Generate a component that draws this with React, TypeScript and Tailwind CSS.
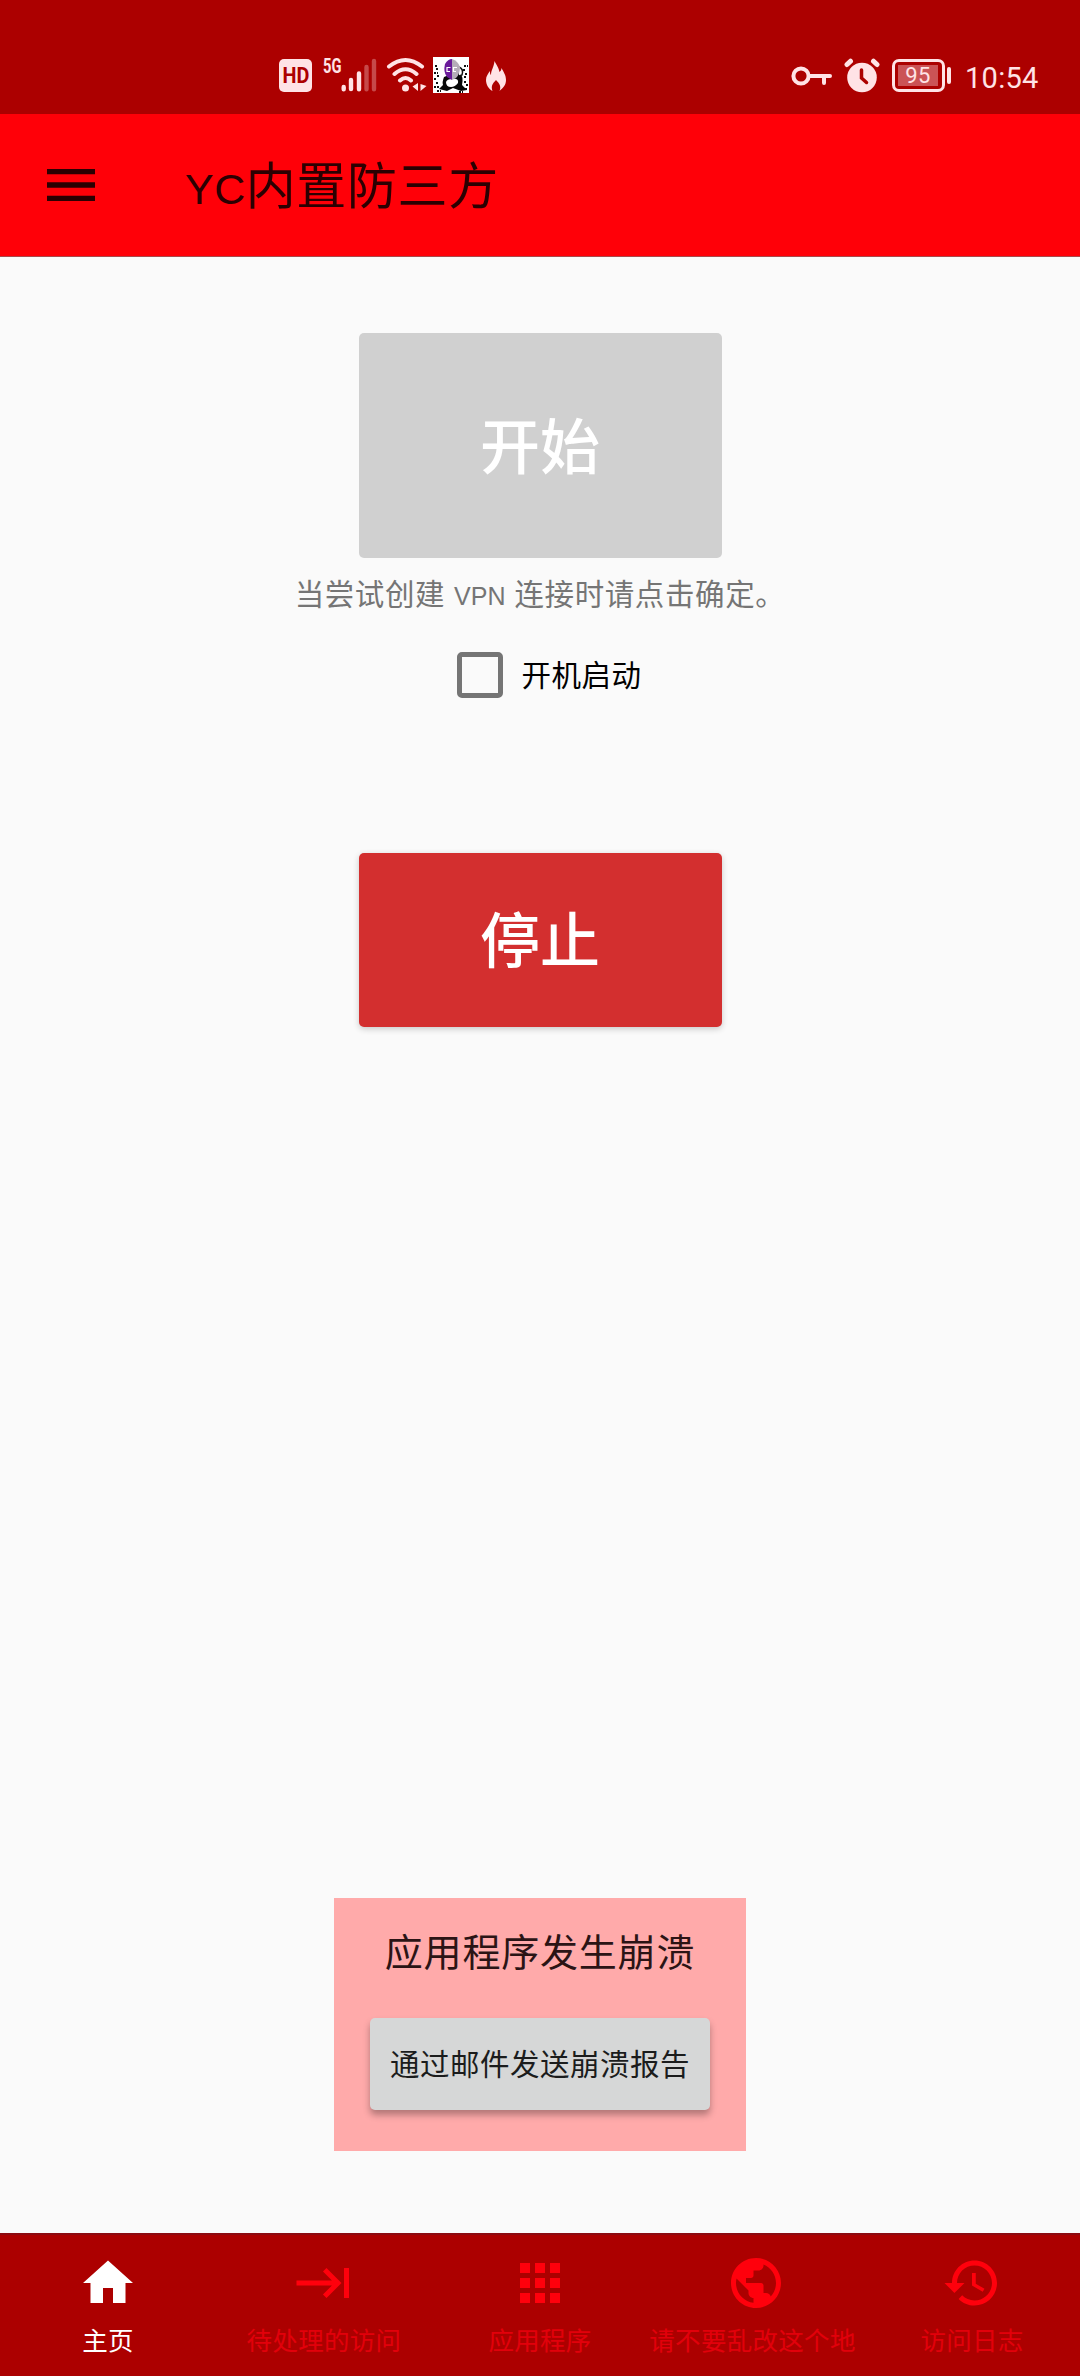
import React from 'react';

interface Tab {
  label: string;
  path: string;
  active?: boolean;
}

const tabs: Tab[] = [
  { label: '主页', active: true, path: 'M10 20v-6h4v6h5v-8h3L12 3 2 12h3v8z' },
  { label: '待处理的访问', path: 'M11.59 7.41L15.17 11H1v2h14.17l-3.59 3.59L13 18l6-6-6-6-1.41 1.41zM20 6v12h2V6h-2z' },
  { label: '应用程序', path: 'M4 8h4V4H4v4zm6 12h4v-4h-4v4zm-6 0h4v-4H4v4zm0-6h4v-4H4v4zm6 0h4v-4h-4v4zm6-10v4h4V4h-4zm-6 4h4V4h-4v4zm6 6h4v-4h-4v4zm0 6h4v-4h-4v4z' },
  { label: '请不要乱改这个地', path: 'M12 2C6.48 2 2 6.48 2 12s4.48 10 10 10 10-4.48 10-10S17.52 2 12 2zm-1 17.93c-3.95-.49-7-3.85-7-7.93 0-.62.08-1.21.21-1.79L9 15v1c0 1.1.9 2 2 2v1.93zm6.9-2.54c-.26-.81-1-1.39-1.9-1.39h-1v-3c0-.55-.45-1-1-1H8v-2h2c.55 0 1-.45 1-1V7h2c1.1 0 2-.9 2-2v-.41c2.93 1.19 5 4.06 5 7.41 0 2.08-.8 3.97-2.1 5.39z' },
  { label: '访问日志', path: 'M13 3c-4.97 0-9 4.03-9 9H1l3.89 3.89.07.14L9 12H6c0-3.87 3.13-7 7-7s7 3.13 7 7-3.13 7-7 7c-1.93 0-3.68-.79-4.94-2.06l-1.42 1.42C8.27 19.99 10.51 21 13 21c4.97 0 9-4.03 9-9s-4.03-9-9-9zm-1 5v5l4.28 2.54.72-1.21-3.5-2.08V8H12z' },
];

const StatusBar: React.FC = () => (
  <div className="h-[114px] bg-[#ac0000] flex items-start justify-between pt-[57px] pl-[279px] pr-[42px] text-[#ffe3e6] font-['Roboto',sans-serif]">
    <div className="flex items-start">
      {/* HD badge */}
      <div className="mt-0.5 w-[33px] h-[33px] rounded-[5px] bg-[#ffe3e6] text-[#ac0000] flex items-center justify-center text-[22px] leading-none font-bold">
        <span className="scale-x-90">HD</span>
      </div>

      {/* Cell signal */}
      <div className="ml-[11px] w-[19px] h-[18px] pt-px text-[21px] leading-[16px] font-bold">
        <span className="block origin-left scale-x-[0.7]">5G</span>
      </div>
      <svg className="mt-px -ml-px" width="36" height="36" viewBox="0 0 36 36" fill="none" stroke="currentColor" strokeWidth="4.4" strokeLinecap="round">
        <path d="M2.7 29v2.2M10 22v9M18 15.500v15.700" />
        <path d="M25.500 9v22.200M33 3v28.200" opacity=".32" />
      </svg>

      {/* Wifi */}
      <svg className="ml-[9px]" width="42" height="36" viewBox="0 0 42 36" fill="none" stroke="currentColor" strokeWidth="4" strokeLinecap="round">
        <path d="M3 9.500Q19.500-3.500 36 9.500M8.500 17Q19.500 7.500 30.500 17M14 23.500q5.500-5 11 0" />
        <circle cx="19.500" cy="31" r="3.500" fill="currentColor" stroke="none" />
        <path d="M32 26v8l-5.500-4.500zM34.500 27v7l6-5z" fill="currentColor" stroke="none" />
      </svg>

      {/* App notification picture */}
      <svg className="ml-[5px]" width="36" height="36" viewBox="0 0 36 36">
        <path d="M0 0h36v36H0z" fill="#fff" />
        <path d="M11 20q-2 5-1 8l-4 4 8 2 6-3 8 3 6-1-5-5q2-8-3-14z" fill="#080808" />
        <path d="M13 25q1-3 6-3 7-1 6 4-3 4-7 4-5 0-5-5z" fill="#fff" />
        <path d="M26 10q5 2 3 8l-3 1" fill="#fff" stroke="#111" strokeWidth="1.500" />
        <path d="M19 2q-4 0-7 5-2 8 2 13l5 3z" fill="#6a1a9a" />
        <path d="M19 2q6 2 8 8 0 7-4 11l-4 2z" fill="#b5adb8" />
        <path d="M17.500 10.500H14v4h3M24 10.500h-3.500v4H23" fill="none" stroke="#fff" strokeWidth="1.200" />
        <path d="M2 9h3M3 12h2M1 16h4M4 19h2M1 22h3M3 26h2M1 30h5M4 34h4M31 9h4M30 13h3M32 17h2M31 20h3M31 25h3M33 28h2M32 32h3M26 35h4" stroke="#111" strokeWidth="2" strokeDasharray="2 1" />
      </svg>

      {/* Flame */}
      <svg className="ml-[17px] mt-1" width="20" height="30" viewBox="0 0 20 30" fill="currentColor">
        <path d="M8.500 0c2 4 4 6 5 11 1-1 2-2 2-4 2 4 4.500 7 4.500 12 0 5-3 8-6.500 11 2-5-.5-8-3.500-11-3 3-5.500 6-3.500 11C3 28 0 24 0 19c0-4 2-6 4-9 0 2 0 3 1 4C5 9 8 6 8.500 0z" />
      </svg>
    </div>

    <div className="flex items-start">
      {/* VPN key */}
      <svg className="mt-2" width="42" height="22" viewBox="0 0 42 22" fill="none" stroke="currentColor" strokeWidth="4" strokeLinecap="round">
        <circle cx="10" cy="11" r="7.600" />
        <path d="M18 11h21M33 11v7" />
      </svg>

      {/* Alarm */}
      <svg className="ml-[11px] mt-px" width="36" height="36" viewBox="0 0 36 36" fill="none" stroke="currentColor" strokeLinecap="round">
        <circle cx="18" cy="19.500" r="14.800" fill="currentColor" stroke="none" />
        <path d="M3 6.500l3.500-3.300M29.500 3.200L33 6.500" strokeWidth="5" />
        <path d="M17.500 12v8l5 4.500" stroke="#ac0000" strokeWidth="3.500" />
      </svg>

      {/* Battery */}
      <div className="ml-[12px] mt-[2px] flex items-center">
        <div className="w-[53px] h-[33px] rounded-[7px] border-[3px] border-current p-[3px]">
          <div className="h-full w-[40px] bg-[#cb5356] flex items-center justify-center text-[22px] leading-none tracking-[0.5px]">95</div>
        </div>
        <div className="ml-[2px] w-1 h-[17px] rounded-full bg-current" />
      </div>

      <div className="ml-[14px] mt-[3px] w-[73px] text-[29px] leading-[36px] tracking-[0.3px] whitespace-nowrap">10:54</div>
    </div>
  </div>
);

const App: React.FC = () => {
  return (
    <div className="w-[1080px] h-[2376px] flex flex-col bg-[#fafafa] font-['Liberation_Sans','Noto_Sans_CJK_SC',sans-serif] overflow-hidden">
      <StatusBar />

      {/* App bar */}
      <header className="h-[143px] bg-[#ff0008] border-b border-[#a8494b] flex items-center pl-[39px] text-[#2b0002]">
        <svg width="64" height="64" viewBox="0 0 24 24" fill="currentColor">
          <path d="M3 18h18v-2H3v2zm0-5h18v-2H3v2zm0-7v2h18V6H3z" />
        </svg>
        <h1 className="ml-[82px] pt-[6px] text-[50px] leading-[60px] tracking-[0.6px]">
          <span className="text-[43px] tracking-[0.5px]">YC</span>内置防三方
        </h1>
      </header>

      <main className="flex-1 flex flex-col items-center pt-[76px]">
        <button className="w-[363px] h-[225px] rounded-[5px] bg-[#d0d0d0] text-white text-[60px] leading-none font-medium pt-[6px]">
          开始
        </button>
        <p className="mt-[19px] h-[36px] text-[29.5px] leading-[36px] tracking-[0.6px] text-[#757575]">
          当尝试创建 <span className="text-[25px] tracking-[0.1px]">VPN</span> 连接时请点击确定。
        </p>
        <label className="mt-[39px] ml-[19px] h-[46px] flex items-center text-[29.5px] tracking-[0.5px] text-black">
          <span className="w-[46px] h-[46px] rounded-[5px] border-[5px] border-[#757575] mr-[18px]" />
          <span className="pt-[2px]">开机启动</span>
        </label>
        <button className="mt-[155px] w-[363px] h-[174px] rounded-[5px] bg-[#d32f2f] text-white text-[60px] leading-none font-medium pt-[6px] shadow-[0_2px_6px_rgba(0,0,0,0.2)]">
          停止
        </button>

        {/* Crash report */}
        <section className="mt-auto mb-[82px] w-[412px] h-[253px] bg-[#ffaaaa] flex flex-col items-center pt-[31px]">
          <h2 className="text-[38px] leading-[48px] tracking-[0.8px] text-[#2b1415]">应用程序发生崩溃</h2>
          <button className="mt-[41px] w-[340px] h-[92px] rounded-[5px] bg-[#d6d7d7] text-[29.5px] tracking-[0.5px] pt-[3px] text-[#1b1c1c] shadow-[0_5px_7px_rgba(0,0,0,0.3)]">
            通过邮件发送崩溃报告
          </button>
        </section>
      </main>

      <nav className="h-[143px] bg-[#ac0000] border-t-2 border-[#8c0a10] flex">
        {tabs.map(tab => (
          <div key={tab.label} className={`w-[216px] flex flex-col items-center pt-[18px] ${tab.active ? 'text-white' : 'text-[#ff000c]'}`}>
            <svg width="60" height="60" viewBox="0 0 24 24" fill="currentColor">
              <path d={tab.path} />
            </svg>
            <span className={`mt-[11px] text-[25.5px] leading-[34px] tracking-[0.3px] whitespace-nowrap ${tab.active ? '' : 'text-[#e2000b]'} ${tab.label.length > 6 ? 'mr-[7px]' : ''}`}>{tab.label}</span>
          </div>
        ))}
      </nav>
    </div>
  );
};

export default App;
